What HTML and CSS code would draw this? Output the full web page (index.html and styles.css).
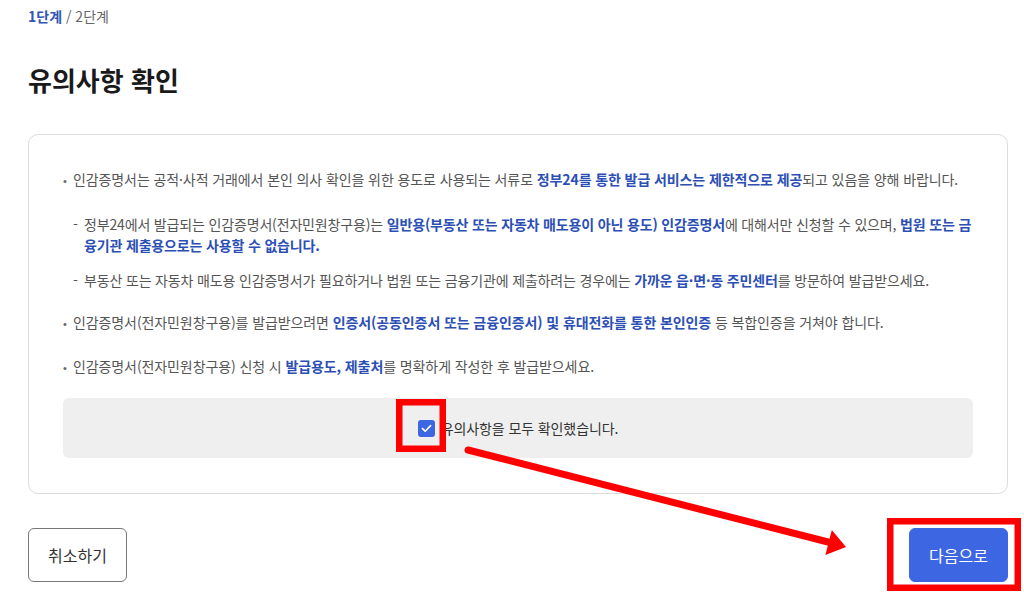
FILE: index.html
```html
<!DOCTYPE html>
<html lang="ko">
<head>
  <meta charset="UTF-8">
  <title>유의사항 확인</title>
  <link rel="stylesheet" href="styles.css">
</head>
<body>
  <div class="page">
    <div class="steps"><strong>1단계</strong> / 2단계</div>

    <h1>유의사항 확인</h1>

    <div class="card">
      <ul class="notice">
        <li>인감증명서는 공적·사적 거래에서 본인 의사 확인을 위한 용도로 사용되는 서류로 <b>정부24를 통한 발급 서비스는 제한적으로 제공</b>되고 있음을 양해 바랍니다.
          <ul class="sub">
            <li>정부24에서 발급되는 인감증명서(전자민원창구용)는 <b>일반용(부동산 또는 자동차 매도용이 아닌 용도) 인감증명서</b>에 대해서만 신청할 수 있으며, <b>법원 또는 금융기관 제출용으로는 사용할 수 없습니다.</b></li>
            <li>부동산 또는 자동차 매도용 인감증명서가 필요하거나 법원 또는 금융기관에 제출하려는 경우에는 <b>가까운 읍·면·동 주민센터</b>를 방문하여 발급받으세요.</li>
          </ul>
        </li>
        <li>인감증명서(전자민원창구용)를 발급받으려면 <b>인증서(공동인증서 또는 금융인증서) 및 휴대전화를 통한 본인인증</b> 등 복합인증을 거쳐야 합니다.</li>
        <li>인감증명서(전자민원창구용) 신청 시 <b>발급용도, 제출처</b>를 명확하게 작성한 후 발급받으세요.</li>
      </ul>

      <div class="agree">
        <label class="check">
          <span class="box">
            <svg width="11" height="9" viewBox="0 0 11 9"><path d="M1.5 4.6 L4.2 7.2 L9.6 1.6" fill="none" stroke="#fff" stroke-width="1.6" stroke-linecap="round" stroke-linejoin="round"/></svg>
          </span>
          유의사항을 모두 확인했습니다.
        </label>
      </div>
    </div>

    <div class="actions">
      <button class="btn cancel">취소하기</button>
      <button class="btn next">다음으로</button>
    </div>

    <!-- annotation marks drawn over the screenshot -->
    <svg class="marks" width="1024" height="600" viewBox="0 0 1024 600">
      <rect x="399.25" y="402.25" width="43.5" height="46.5" fill="none" stroke="#ff0000" stroke-width="6.5"/>
      <rect x="890.25" y="521.25" width="127.5" height="66.5" fill="none" stroke="#ff0000" stroke-width="6.5"/>
      <line x1="468" y1="450" x2="830" y2="542.5" stroke="#ff0000" stroke-width="7" stroke-linecap="round"/>
      <polygon points="846,547 831.8,529.9 825.4,555.1" fill="#ff0000"/>
    </svg>
  </div>
</body>
</html>
```

FILE: styles.css
```css
body { margin: 0; font-family: "Noto Sans CJK KR", "Noto Sans", sans-serif; color: #222; background: #fff; }
.page { position: relative; padding: 6px 16px 0 28px; height: 594px; overflow: hidden; }

.steps { font-size: 14px; line-height: 20px; color: #666; }
.steps strong { color: #3454b4; }

h1 { margin: 36px 0 37px; font-size: 26px; line-height: 35px; font-weight: 700; color: #1a1a1a; }

.card { border: 1px solid #dcdcdc; border-radius: 10px; padding: 34px 34px 35px 34px; }

.notice { list-style: none; margin: 0; padding: 0; font-size: 14px; line-height: 21px; letter-spacing: -0.1px; color: #555; }
.notice > li { padding-left: 10px; text-indent: -10px; margin-bottom: 21px; }
.notice > li:last-child { margin-bottom: 0; }
.notice > li::before { content: "•"; display: inline-block; width: 10px; text-indent: 0; font-family: "Liberation Sans", sans-serif; font-size: 11px; color: #666; }
.notice b { color: #2c4fb5; font-weight: 700; }

.sub { list-style: none; margin: 22px 0 0; padding: 0; letter-spacing: -0.16px; }
.sub li { padding-left: 11px; text-indent: -11px; margin-bottom: 14px; }
.sub li:last-child { margin-bottom: 0; }
.sub li::before { content: "-"; display: inline-block; width: 11px; text-indent: 0; }

.agree { margin-top: 19px; height: 60px; background: #efefef; border-radius: 6px; display: flex; align-items: center; justify-content: center; }
.check { display: flex; align-items: center; gap: 6px; font-size: 14px; letter-spacing: -0.1px; color: #333; }
.box { width: 17px; height: 17px; border-radius: 3px; background: #3d67e2; display: flex; align-items: center; justify-content: center; }

.actions { display: flex; justify-content: space-between; margin-top: 34px; }
.btn { height: 54px; width: 99px; border-radius: 6px; font-family: "Noto Sans CJK KR", sans-serif; font-size: 16px; }
.cancel { background: #fff; border: 1px solid #777; color: #333; }
.next { background: #3d67e2; border: 1px solid #3d67e2; color: #fff; }

.marks { position: absolute; left: 0; top: 0; pointer-events: none; }
```
